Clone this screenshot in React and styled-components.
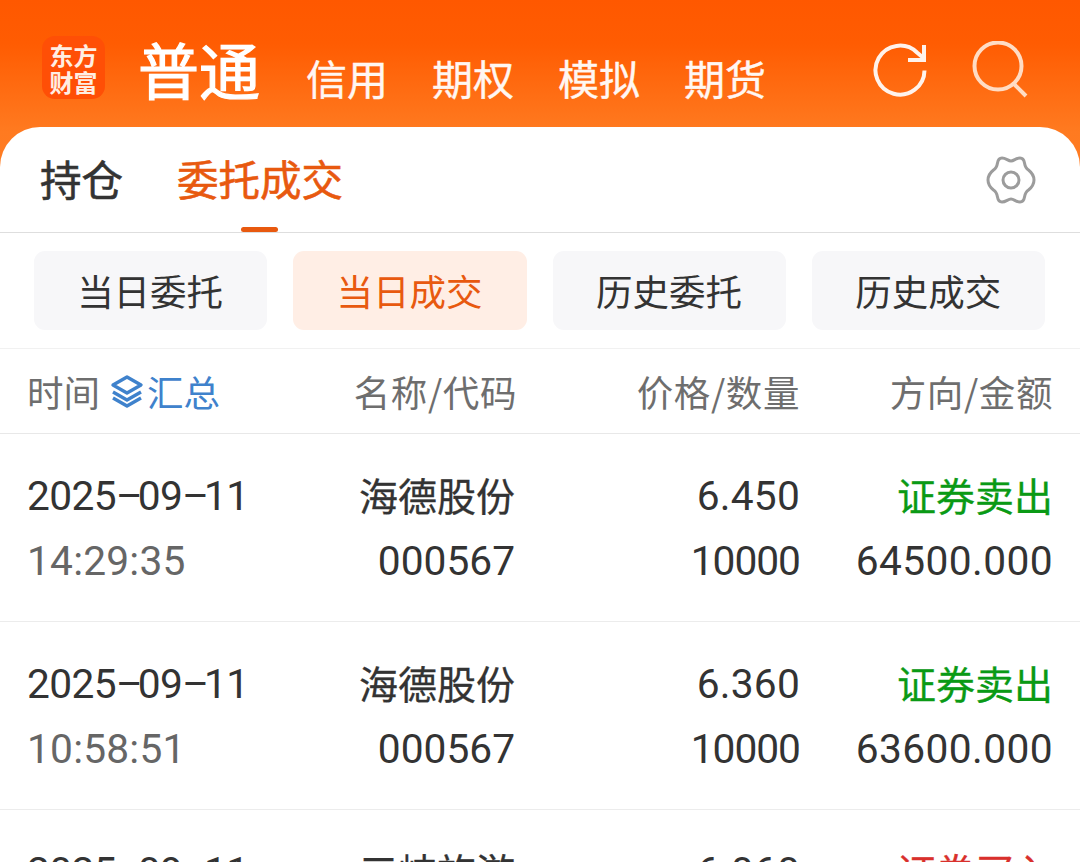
import React from 'react'
import styled, { createGlobalStyle } from 'styled-components'

const GlobalStyle = createGlobalStyle`
  html, body {
    margin: 0;
    padding: 0;
    background: #fff;
    overflow: hidden;
  }
  body {
    font-family: 'Roboto', 'Noto Sans CJK SC', sans-serif;
  }
`

const Page = styled.div`
  width: 1080px;
  height: 862px;
  overflow: hidden;
  background: #fff;
`
const Header = styled.div`
  height: 175px;
  background: linear-gradient(180deg, #ff5800 0%, #ff5c02 25%, #ff7a20 75%, #ff7d24 100%);
  display: flex;
  align-items: flex-start;
  padding: 36px 50px 0 42px;
  box-sizing: border-box;
`
const Logo = styled.div`
  width: 63px;
  height: 63px;
  border-radius: 13px;
  background: #ff4f06;
  color: #ffeee3;
  font-family: 'Noto Sans CJK SC', sans-serif;
  font-size: 24px;
  font-weight: 700;
  line-height: 27px;
  display: flex;
  align-items: center;
  justify-content: center;
  text-align: center;
  flex-shrink: 0;
`
const ModeList = styled.div`
  display: flex;
  align-items: baseline;
  margin-left: 33px;
  margin-top: -2px;
  color: #fff;
`
const ModeMain = styled.span`
  font-family: 'Noto Sans CJK SC', sans-serif;
  font-size: 61px;
  font-weight: 400;
  -webkit-text-stroke: 1.2px #fff;
  line-height: 70px;
  margin-right: 46px;
`
const Mode = styled.span`
  font-family: 'Noto Sans CJK SC', sans-serif;
  font-size: 41px;
  font-weight: 400;
  -webkit-text-stroke: 0.4px #fff;
  line-height: 70px;
  margin-right: 44px;
  opacity: 0.95;
`
const HeaderIcons = styled.div`
  margin-left: auto;
  display: flex;
  gap: 42px;
  padding-top: 5px;
`
const Panel = styled.div`
  margin-top: -48px;
  background: #fff;
  border-radius: 40px 40px 0 0;
  position: relative;
`
const Tabs = styled.div`
  height: 106px;
  box-sizing: border-box;
  display: flex;
  align-items: center;
  padding: 0 44px 0 40px;
  border-bottom: 1px solid #dedede;
  font-family: 'Noto Sans CJK SC', sans-serif;
`
const Tab = styled.div`
  position: relative;
  height: 105px;
  line-height: 102px;
  font-size: 41.5px;
  font-weight: 400;
  -webkit-text-stroke: 0.6px ${(p) => (p.$active ? '#e8590f' : '#333')};
  color: ${(p) => (p.$active ? '#e8590f' : '#333')};
  margin-right: 54px;
`
const TabMark = styled.span`
  position: absolute;
  left: 64px;
  bottom: 0;
  width: 37px;
  height: 5px;
  border-radius: 3px;
  background: #e8590f;
`
const Gear = styled.div`
  margin-left: auto;
  display: flex;
`
const Filters = styled.div`
  height: 116px;
  box-sizing: border-box;
  padding: 18px 34.5px 0 34px;
  display: grid;
  grid-template-columns: repeat(4, 233.25px);
  justify-content: space-between;
  border-bottom: 1px solid #f1f1f1;
`
const FilterBtn = styled.div`
  height: 79px;
  padding: 0 1px 1px 0;
  box-sizing: border-box;
  border-radius: 11px;
  background: ${(p) => (p.$active ? '#ffeee5' : '#f7f7f9')};
  color: ${(p) => (p.$active ? '#e8590f' : '#333')};
  font-family: 'Noto Sans CJK SC', sans-serif;
  font-size: 36.5px;
  display: flex;
  align-items: center;
  justify-content: center;
`
const gridCols = '284px 204px 285px 253px'
const HeadRow = styled.div`
  height: 85px;
  box-sizing: border-box;
  display: grid;
  grid-template-columns: 286px 204px 283px 253px;
  align-items: center;
  padding: 0 27px 0 27px;
  border-bottom: 1px solid #e8e8e8;
  font-family: 'Noto Sans CJK SC', sans-serif;
  font-size: 36.5px;
  color: #6e6e6e;
`
const HeadCell = styled.div`
  text-align: right;
  white-space: nowrap;
  letter-spacing: 0.6px;
`
const TimeHead = styled.div`
  display: flex;
  align-items: center;
`
const Summary = styled.span`
  display: inline-flex;
  align-items: center;
  color: #3f82cc;
  margin-left: 10px;
  gap: 3px;
`
const Row = styled.div`
  height: 188px;
  box-sizing: border-box;
  display: grid;
  grid-template-columns: ${gridCols};
  grid-template-rows: 65px 65px;
  align-content: start;
  padding: 30px 26px 0 27px;
  border-bottom: 1px solid #ececec;
  font-size: 40.7px;
  line-height: 64px;
  color: #333;
`
const Cell = styled.div`
  text-align: right;
  white-space: nowrap;
  font-family: 'Roboto', 'Noto Sans CJK SC', sans-serif;
  letter-spacing: ${(p) => p.$spacing || '0'};
`
const CnCell = styled(Cell)`
  font-family: 'Noto Sans CJK SC', sans-serif;
  font-size: 39px;
  line-height: 60px;
  -webkit-text-stroke: 0.3px ${(p) => p.$color || '#333'};
  color: ${(p) => p.$color || '#333'};
`
const DateCell = styled.div`
  white-space: nowrap;
  letter-spacing: -0.6px;
`
const Dash = styled.span`
  letter-spacing: -6px;
  margin-right: 1px;
`
const TimeCell = styled.div`
  white-space: nowrap;
  color: #666;
  letter-spacing: 0.2px;
`

const rows = [
  { date: ['2025', '09', '11'], time: '14:29:35', name: '海德股份', code: '000567', price: '6.450', qty: '10000', dir: '证券卖出', amount: '64500.000', color: '#0a9a15' },
  { date: ['2025', '09', '11'], time: '10:58:51', name: '海德股份', code: '000567', price: '6.360', qty: '10000', dir: '证券卖出', amount: '63600.000', color: '#0a9a15' },
  { date: ['2025', '09', '11'], time: '09:45:12', name: '三峡旅游', code: '002627', price: '6.060', qty: '10000', dir: '证券买入', amount: '60600.000', color: '#d9302c' },
]

const RefreshIcon = () => (
  <svg width="58" height="58" viewBox="0 0 58 58" fill="none" stroke="#fff" strokeWidth="4" opacity="0.92">
    <path d="M52.5 29.5A24.5 24.5 0 1 1 45 11.5L51.5 17" />
    <path d="M52 4v15H36" />
  </svg>
)

const SearchIcon = () => (
  <svg width="58" height="58" viewBox="0 0 58 58" fill="none" stroke="#ffdcc4" strokeWidth="4">
    <circle cx="26" cy="25" r="23.5" />
    <path d="M42 43l12 12" />
  </svg>
)

const GearIcon = () => (
  <svg width="50" height="48" viewBox="0 0 50 48" fill="none" stroke="#9c9c9c" strokeWidth="3">
    <path
      d="M25 5C28 5 30 2 34 2C37 2 38 4 38.5 7C39 10 40 12.5 42.5 14C45 16 48 20 48 24C48 28 45 32 42.5 34C40 35.5 39 38 38.5 41C38 44 37 46 34 46C30 46 28 43 25 43C22 43 20 46 16 46C13 46 12 44 11.5 41C11 38 10 35.5 7.5 34C5 32 2 28 2 24C2 20 5 16 7.5 14C10 12.5 11 10 11.5 7C12 4 13 2 16 2C20 2 22 5 25 5Z"
      strokeLinejoin="round"
    />
    <circle cx="25" cy="24" r="8" />
  </svg>
)

const LayersIcon = () => (
  <svg width="34" height="34" viewBox="0 0 34 34" fill="none" stroke="#3f82cc" strokeWidth="3.400" strokeLinejoin="round">
    <path d="M17 3L31 11 17 19 3 11z" />
    <path d="M3 18l14 8 14-8" />
    <path d="M3 24l14 8 14-8" />
  </svg>
)

const App = () => {
  return (
    <Page>
      <GlobalStyle />
      <Header>
        <Logo>
          东方
          <br />
          财富
        </Logo>
        <ModeList>
          <ModeMain>普通</ModeMain>
          <Mode>信用</Mode>
          <Mode>期权</Mode>
          <Mode>模拟</Mode>
          <Mode>期货</Mode>
        </ModeList>
        <HeaderIcons>
          <RefreshIcon />
          <SearchIcon />
        </HeaderIcons>
      </Header>
      <Panel>
        <Tabs>
          <Tab>持仓</Tab>
          <Tab $active>
            委托成交
            <TabMark />
          </Tab>
          <Gear>
            <GearIcon />
          </Gear>
        </Tabs>
        <Filters>
          <FilterBtn>当日委托</FilterBtn>
          <FilterBtn $active>当日成交</FilterBtn>
          <FilterBtn>历史委托</FilterBtn>
          <FilterBtn>历史成交</FilterBtn>
        </Filters>
        <HeadRow>
          <TimeHead>
            时间
            <Summary>
              <LayersIcon />
              汇总
            </Summary>
          </TimeHead>
          <HeadCell>名称/代码</HeadCell>
          <HeadCell>价格/数量</HeadCell>
          <HeadCell>方向/金额</HeadCell>
        </HeadRow>
        {rows.map((row) => (
          <Row key={row.time}>
            <DateCell>
              {row.date[0]}
              <Dash>–</Dash>
              {row.date[1]}
              <Dash>–</Dash>
              {row.date[2]}
            </DateCell>
            <CnCell>{row.name}</CnCell>
            <Cell $spacing="0.2px">{row.price}</Cell>
            <CnCell $color={row.color}>{row.dir}</CnCell>
            <TimeCell>{row.time}</TimeCell>
            <Cell>{row.code}</Cell>
            <Cell $spacing="-1px">{row.qty}</Cell>
            <Cell $spacing="0.4px">{row.amount}</Cell>
          </Row>
        ))}
      </Panel>
    </Page>
  )
}

export default App
